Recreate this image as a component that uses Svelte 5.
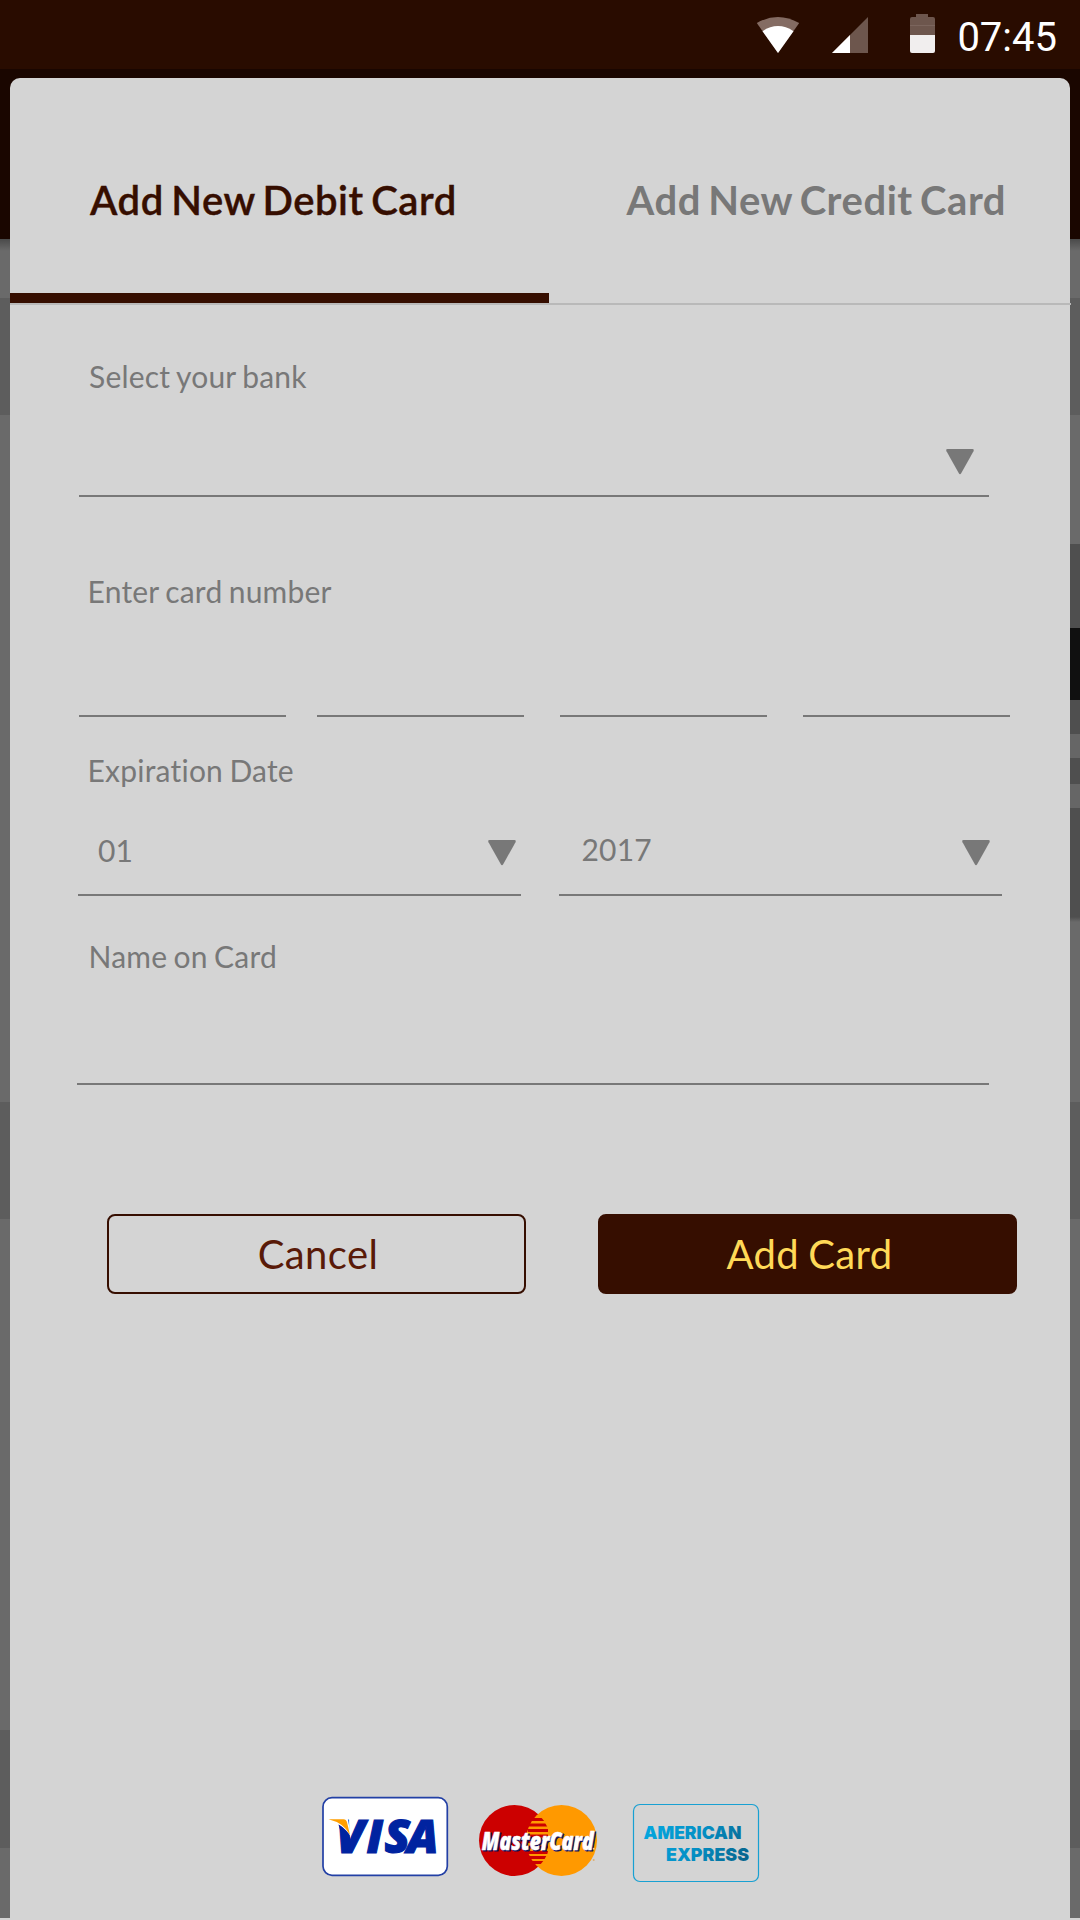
<script>
  // Blocks of the dimmed screen that show on either side of the dialog
  const leftEdge = [
    { h: 59, tone: 'light' }, { h: 117, tone: 'mid' }, { h: 687, tone: 'light' },
    { h: 117, tone: 'mid' }, { h: 511, tone: 'light' }, { h: 118, tone: 'mid' },
    { h: 70, tone: 'light' }
  ];
  const rightEdge = [
    { h: 59, tone: 'light' }, { h: 117, tone: 'mid' }, { h: 129, tone: 'light' },
    { h: 84, tone: 'dark' }, { h: 72, tone: 'black' }, { h: 34, tone: 'dark' },
    { h: 24, tone: 'soft' }, { h: 26, tone: 'dark' }, { h: 24, tone: 'soft' },
    { h: 109, tone: 'dark' }, { h: 5, tone: 'fade' }, { h: 180, tone: 'light' },
    { h: 117, tone: 'mid' }, { h: 511, tone: 'light' }, { h: 118, tone: 'mid' },
    { h: 70, tone: 'light' }
  ];
  const stripes = [1818, 1823.5, 1829, 1834.5, 1840, 1845.5, 1851, 1856, 1861];
</script>

{#snippet arrow()}
  <svg class="arrow" width="28" height="26" viewBox="0 0 28 26">
    <path d="M1.5 0H26.5Q28.400 .2 27.500 2.200L15.200 24.300Q14 26 12.800 24.300L.5 2.200Q-.4 .2 1.500 0Z" />
  </svg>
{/snippet}

<div class="screen">
  <header class="status">
    <svg class="wifi" width="44" height="36" viewBox="0 0 44 36">
      <path fill="#846c63" d="M.8 6Q22 -6 43.200 6L22 36Z" />
      <path fill="#fff" d="M6.500 14.200Q22 4 37.500 14.200L22 36Z" />
    </svg>
    <svg class="signal" width="36" height="36" viewBox="0 0 36 36">
      <path fill="#6d564d" d="M36 0V36H0Z" />
      <path fill="#fff" d="M18 18V36H0Z" />
    </svg>
    <svg class="battery" width="25" height="39" viewBox="0 0 25 39">
      <path fill="#6d564d" d="M6 0H18V3H23Q25 3 25 5V21H0V5Q0 3 2 3H6Z" />
      <path fill="#7b655d" d="M0 11H25V12H0Z" />
      <path fill="#f1eeee" d="M0 21H25V37Q25 39 23 39H2Q0 39 0 37Z" />
    </svg>
    <span class="time">07:45</span>
  </header>

  <div class="stage">
    <div class="edge">
      <div class="appbar"></div>
      <div class="shade"></div>
      {#each leftEdge as b}<div class={b.tone} style="height:{b.h}px"></div>{/each}
    </div>

    <main class="dialog">
      <nav class="tabs">
        <div class="tab active">Add New Debit Card</div>
        <div class="tab">Add New Credit Card</div>
      </nav>

      <section class="field bank">
        <label for="bank">Select your bank</label>
        <div id="bank" class="line">{@render arrow()}</div>
      </section>

      <section class="field number">
        <span class="label">Enter card number</span>
        <div class="groups">
          <div class="line"></div><div class="line"></div><div class="line"></div><div class="line"></div>
        </div>
      </section>

      <section class="field expiry">
        <span class="label">Expiration Date</span>
        <div class="dates">
          <div class="line month"><span>01</span>{@render arrow()}</div>
          <div class="line year"><span>2017</span>{@render arrow()}</div>
        </div>
      </section>

      <section class="field name">
        <span class="label">Name on Card</span>
        <div class="line"></div>
      </section>

      <div class="actions">
        <button class="cancel">Cancel</button>
        <button class="add">Add Card</button>
      </div>

      <footer class="brands">
        <svg width="440" height="90" viewBox="320 1795 440 90">
          <defs>
            <linearGradient id="amex" gradientUnits="userSpaceOnUse" x1="650" y1="1826" x2="742" y2="1870">
              <stop offset="0" stop-color="#04a5dd" />
              <stop offset=".5" stop-color="#058fc4" />
              <stop offset="1" stop-color="#06648c" />
            </linearGradient>
            <clipPath id="red-disc"><circle cx="514.500" cy="1840.500" r="35.500" /></clipPath>
          </defs>

          <!-- Visa -->
          <rect x="323" y="1797.700" width="124.300" height="77.600" rx="9" fill="#fff" stroke="#2340a5" stroke-width="1.700" />
          <text class="visa" x="336 366.500 384.500 407" y="1852.500">VISA</text>
          <path fill="#fff" d="M328 1817H347.500L351 1836L342 1827Z" />
          <path fill="#ff9f00" d="M328.500 1819.300H343.500Q346.200 1819.300 347 1822.200L350 1835Q344 1823 328.500 1819.300Z" />
          <path fill="#0023a0" d="M338.500 1824.500Q346 1829 349.800 1835.500L351 1846L346 1850Z" />

          <!-- MasterCard -->
          <circle cx="514.500" cy="1840.500" r="35.500" fill="#c00" />
          <circle cx="561.500" cy="1840.500" r="35.500" fill="#f90" />
          <g clip-path="url(#red-disc)" fill="#c00">
            {#each stripes as y}<rect x="528" {y} width="20" height="3" />{/each}
          </g>
          <text class="mc shadow" x="483" y="1850.900" textLength="112" lengthAdjust="spacingAndGlyphs">MasterCard</text>
          <text class="mc" x="481.800" y="1849.500" textLength="112" lengthAdjust="spacingAndGlyphs">MasterCard</text>
          <circle cx="593.700" cy="1848.700" r="1" fill="#fbc886" />
          <circle cx="593.700" cy="1860" r="1" fill="#dcae74" />

          <!-- American Express -->
          <rect x="633.500" y="1804.500" width="125" height="77" rx="6.500" fill="none" stroke="#18a0d2" stroke-width="1.200" />
          <text class="amex" x="643.500" y="1839" textLength="98" lengthAdjust="spacingAndGlyphs">AMERICAN</text>
          <text class="amex" x="666" y="1860.500" textLength="83" lengthAdjust="spacingAndGlyphs">EXPRESS</text>
        </svg>
      </footer>
    </main>

    <div class="edge">
      <div class="appbar"></div>
      <div class="shade"></div>
      {#each rightEdge as b}<div class={b.tone} style="height:{b.h}px"></div>{/each}
    </div>
  </div>
</div>

<style>
  :global(body) { margin: 0; background: #d4d4d4; }
  .screen, .screen * { box-sizing: border-box; }
  .screen {
    width: 1080px;
    height: 1920px;
    overflow: hidden;
    display: flex;
    flex-direction: column;
    background: #d4d4d4;
    font-family: Lato, sans-serif;
    font-variant-ligatures: none;
    color: #787878;
  }
  svg { display: block; flex: none; }

  .status {
    height: 69px;
    flex: none;
    display: flex;
    align-items: flex-start;
    justify-content: flex-end;
    padding: 14px 23px 0 0;
    background: #290c00;
  }
  .wifi { margin: 3px 32px 0 0; }
  .signal { margin: 3px 42px 0 0; }
  .battery { margin-right: 22px; }
  .time { font: 40px/47px Roboto, sans-serif; color: #fff; }

  .stage {
    flex: 1;
    display: grid;
    grid-template-columns: 10px 1060px 10px;
    background: linear-gradient(#1a0600 170px, #d4d4d4 170px);
  }
  .edge { position: relative; }
  .appbar { height: 170px; background: #1a0600; }
  .shade {
    position: absolute;
    top: 170px;
    width: 10px;
    height: 12px;
    background: linear-gradient(rgba(0, 0, 0, .3), transparent);
  }
  .light { background: #6a6a6a; }
  .mid { background: #5d5d5d; }
  .dark { background: #4f4f4f; }
  .soft { background: #666; }
  .black { background: #101010; }
  .fade { background: linear-gradient(#4f4f4f, #6a6a6a); }

  .dialog {
    position: relative;
    z-index: 1;
    margin-top: 9px;
    height: 1842px;
    border-radius: 10px 10px 0 0;
    background: #d4d4d4;
    display: flex;
    flex-direction: column;
  }
  .tabs {
    width: 1061px;
    height: 227px;
    flex: none;
    display: flex;
    border-bottom: 2px solid #b9b9b9;
  }
  .tab {
    width: 522px;
    flex: none;
    padding: 98px 0 0 77.500px;
    font: 700 40px/48px Lato, sans-serif;
    letter-spacing: .55px;
    word-spacing: -3px;
    white-space: nowrap;
  }
  .tab.active {
    width: 539px;
    padding-left: 80px;
    font-weight: 600;
    -webkit-text-stroke: .4px #360e00;
    color: #360e00;
    border-bottom: 10px solid #360e00;
  }

  .field {
    display: flex;
    flex-direction: column;
    flex: none;
    font-size: 30px;
    line-height: 40px;
    letter-spacing: .22px;
    word-spacing: -1.600px;
  }
  label, .label { display: block; height: 40px; }
  .line { border-bottom: 2px solid #787878; }
  .arrow { fill: #787878; }

  .bank { margin: 51px 81px 0 69px; }
  .bank label { padding-left: 10px; }
  .bank .line { height: 101px; display: flex; justify-content: flex-end; padding: 53px 15px 0 0; }

  .number { margin: 74px 60px 0 69px; }
  .number .label { padding-left: 8.500px; }
  .groups { display: grid; grid-template-columns: 207px 31px 207px 36px 207px 36px 207px; height: 106px; }
  .groups .line:nth-child(1) { grid-column: 1; }
  .groups .line:nth-child(2) { grid-column: 3; }
  .groups .line:nth-child(3) { grid-column: 5; }
  .groups .line:nth-child(4) { grid-column: 7; }

  .expiry { margin: 33px 68px 0 68px; }
  .expiry .label { padding-left: 9.500px; }
  .dates { display: grid; grid-template-columns: 443px 443px; justify-content: space-between; height: 106px; }
  .dates .line { display: flex; justify-content: space-between; padding: 40px 5px 0 20px; }
  .dates .year { padding: 39px 12px 0 22.500px; }
  .dates .arrow { margin-top: 10px; }
  .dates .year .arrow { margin-top: 11px; }

  .name { margin: 40px 81px 0 67px; }
  .name .label { padding-left: 11.500px; }
  .name .line { height: 109px; }

  .actions { display: flex; gap: 72px; margin: 129px 0 0 97px; }
  button {
    width: 419px;
    height: 80px;
    padding: 0;
    border: 2px solid #360e00;
    border-radius: 8px;
    font: 40px/48px Lato, sans-serif;
    letter-spacing: .4px;
    word-spacing: -1.500px;
  }
  .cancel { background: none; color: #591a08; padding-left: 3px; }
  .add { background: #360e00; color: #ffd957; padding-left: 4px; }

  .brands { margin: 501px 0 0 310px; }
  .visa { font: italic 800 46.500px 'Open Sans', sans-serif; fill: #0023a0; stroke: #0023a0; stroke-width: 1.200px; }
  .mc { font: italic 800 25.500px 'Open Sans', sans-serif; fill: #fff; stroke: #fff; stroke-width: .5px; }
  .mc.shadow { fill: #10105c; stroke: #10105c; stroke-width: 1.200px; }
  .amex { font: 900 17.900px Inter, sans-serif; fill: url(#amex); }
</style>
